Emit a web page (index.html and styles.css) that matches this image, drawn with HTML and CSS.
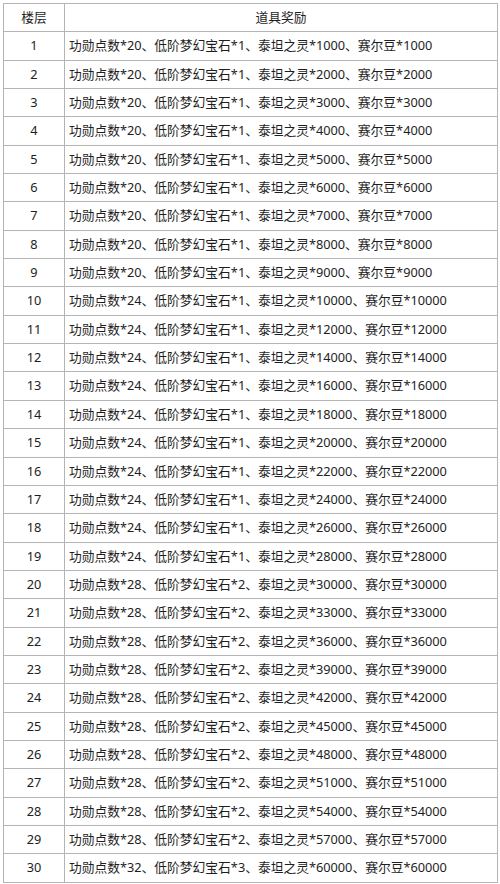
FILE: index.html
```html
<!DOCTYPE html>
<html lang="zh-CN">
<head>
<meta charset="utf-8">
<link rel="stylesheet" href="styles.css">
</head>
<body>
<table class="reward-table">
<thead>
<tr><th class="floor">楼层</th><th class="items">道具奖励</th></tr>
</thead>
<tbody>
<tr><td class="floor">1</td><td class="items">功勋点数*20、低阶梦幻宝石*1、泰坦之灵*1000、赛尔豆*1000</td></tr>
<tr><td class="floor">2</td><td class="items">功勋点数*20、低阶梦幻宝石*1、泰坦之灵*2000、赛尔豆*2000</td></tr>
<tr><td class="floor">3</td><td class="items">功勋点数*20、低阶梦幻宝石*1、泰坦之灵*3000、赛尔豆*3000</td></tr>
<tr><td class="floor">4</td><td class="items">功勋点数*20、低阶梦幻宝石*1、泰坦之灵*4000、赛尔豆*4000</td></tr>
<tr><td class="floor">5</td><td class="items">功勋点数*20、低阶梦幻宝石*1、泰坦之灵*5000、赛尔豆*5000</td></tr>
<tr><td class="floor">6</td><td class="items">功勋点数*20、低阶梦幻宝石*1、泰坦之灵*6000、赛尔豆*6000</td></tr>
<tr><td class="floor">7</td><td class="items">功勋点数*20、低阶梦幻宝石*1、泰坦之灵*7000、赛尔豆*7000</td></tr>
<tr><td class="floor">8</td><td class="items">功勋点数*20、低阶梦幻宝石*1、泰坦之灵*8000、赛尔豆*8000</td></tr>
<tr><td class="floor">9</td><td class="items">功勋点数*20、低阶梦幻宝石*1、泰坦之灵*9000、赛尔豆*9000</td></tr>
<tr><td class="floor">10</td><td class="items">功勋点数*24、低阶梦幻宝石*1、泰坦之灵*10000、赛尔豆*10000</td></tr>
<tr><td class="floor">11</td><td class="items">功勋点数*24、低阶梦幻宝石*1、泰坦之灵*12000、赛尔豆*12000</td></tr>
<tr><td class="floor">12</td><td class="items">功勋点数*24、低阶梦幻宝石*1、泰坦之灵*14000、赛尔豆*14000</td></tr>
<tr><td class="floor">13</td><td class="items">功勋点数*24、低阶梦幻宝石*1、泰坦之灵*16000、赛尔豆*16000</td></tr>
<tr><td class="floor">14</td><td class="items">功勋点数*24、低阶梦幻宝石*1、泰坦之灵*18000、赛尔豆*18000</td></tr>
<tr><td class="floor">15</td><td class="items">功勋点数*24、低阶梦幻宝石*1、泰坦之灵*20000、赛尔豆*20000</td></tr>
<tr><td class="floor">16</td><td class="items">功勋点数*24、低阶梦幻宝石*1、泰坦之灵*22000、赛尔豆*22000</td></tr>
<tr><td class="floor">17</td><td class="items">功勋点数*24、低阶梦幻宝石*1、泰坦之灵*24000、赛尔豆*24000</td></tr>
<tr><td class="floor">18</td><td class="items">功勋点数*24、低阶梦幻宝石*1、泰坦之灵*26000、赛尔豆*26000</td></tr>
<tr><td class="floor">19</td><td class="items">功勋点数*24、低阶梦幻宝石*1、泰坦之灵*28000、赛尔豆*28000</td></tr>
<tr><td class="floor">20</td><td class="items">功勋点数*28、低阶梦幻宝石*2、泰坦之灵*30000、赛尔豆*30000</td></tr>
<tr><td class="floor">21</td><td class="items">功勋点数*28、低阶梦幻宝石*2、泰坦之灵*33000、赛尔豆*33000</td></tr>
<tr><td class="floor">22</td><td class="items">功勋点数*28、低阶梦幻宝石*2、泰坦之灵*36000、赛尔豆*36000</td></tr>
<tr><td class="floor">23</td><td class="items">功勋点数*28、低阶梦幻宝石*2、泰坦之灵*39000、赛尔豆*39000</td></tr>
<tr><td class="floor">24</td><td class="items">功勋点数*28、低阶梦幻宝石*2、泰坦之灵*42000、赛尔豆*42000</td></tr>
<tr><td class="floor">25</td><td class="items">功勋点数*28、低阶梦幻宝石*2、泰坦之灵*45000、赛尔豆*45000</td></tr>
<tr><td class="floor">26</td><td class="items">功勋点数*28、低阶梦幻宝石*2、泰坦之灵*48000、赛尔豆*48000</td></tr>
<tr><td class="floor">27</td><td class="items">功勋点数*28、低阶梦幻宝石*2、泰坦之灵*51000、赛尔豆*51000</td></tr>
<tr><td class="floor">28</td><td class="items">功勋点数*28、低阶梦幻宝石*2、泰坦之灵*54000、赛尔豆*54000</td></tr>
<tr><td class="floor">29</td><td class="items">功勋点数*28、低阶梦幻宝石*2、泰坦之灵*57000、赛尔豆*57000</td></tr>
<tr><td class="floor">30</td><td class="items">功勋点数*32、低阶梦幻宝石*3、泰坦之灵*60000、赛尔豆*60000</td></tr>
</tbody>
</table>
</body>
</html>
```

FILE: styles.css
```css
html, body {
  margin: 0;
  padding: 0;
  background: #ffffff;
}
body {
  padding: 3px 2px 0 3px;
  font-family: "Noto Sans", "Noto Sans CJK SC", sans-serif;
  font-size: 12.75px;
  color: #1e1e1e;
}
.reward-table {
  border-collapse: collapse;
  width: 495px;
  table-layout: fixed;
}
.reward-table tr {
  height: 28.35px;
}
.reward-table th,
.reward-table td {
  border: 1px solid #b4b4b4;
  padding: 0 4px;
  font-weight: normal;
  line-height: 1.2;
  white-space: nowrap;
  vertical-align: middle;
}
.reward-table .floor {
  width: 60px;
  text-align: center;
  padding: 0;
}
.reward-table td.items {
  text-align: left;
}
.reward-table th.items {
  text-align: center;
}
```
